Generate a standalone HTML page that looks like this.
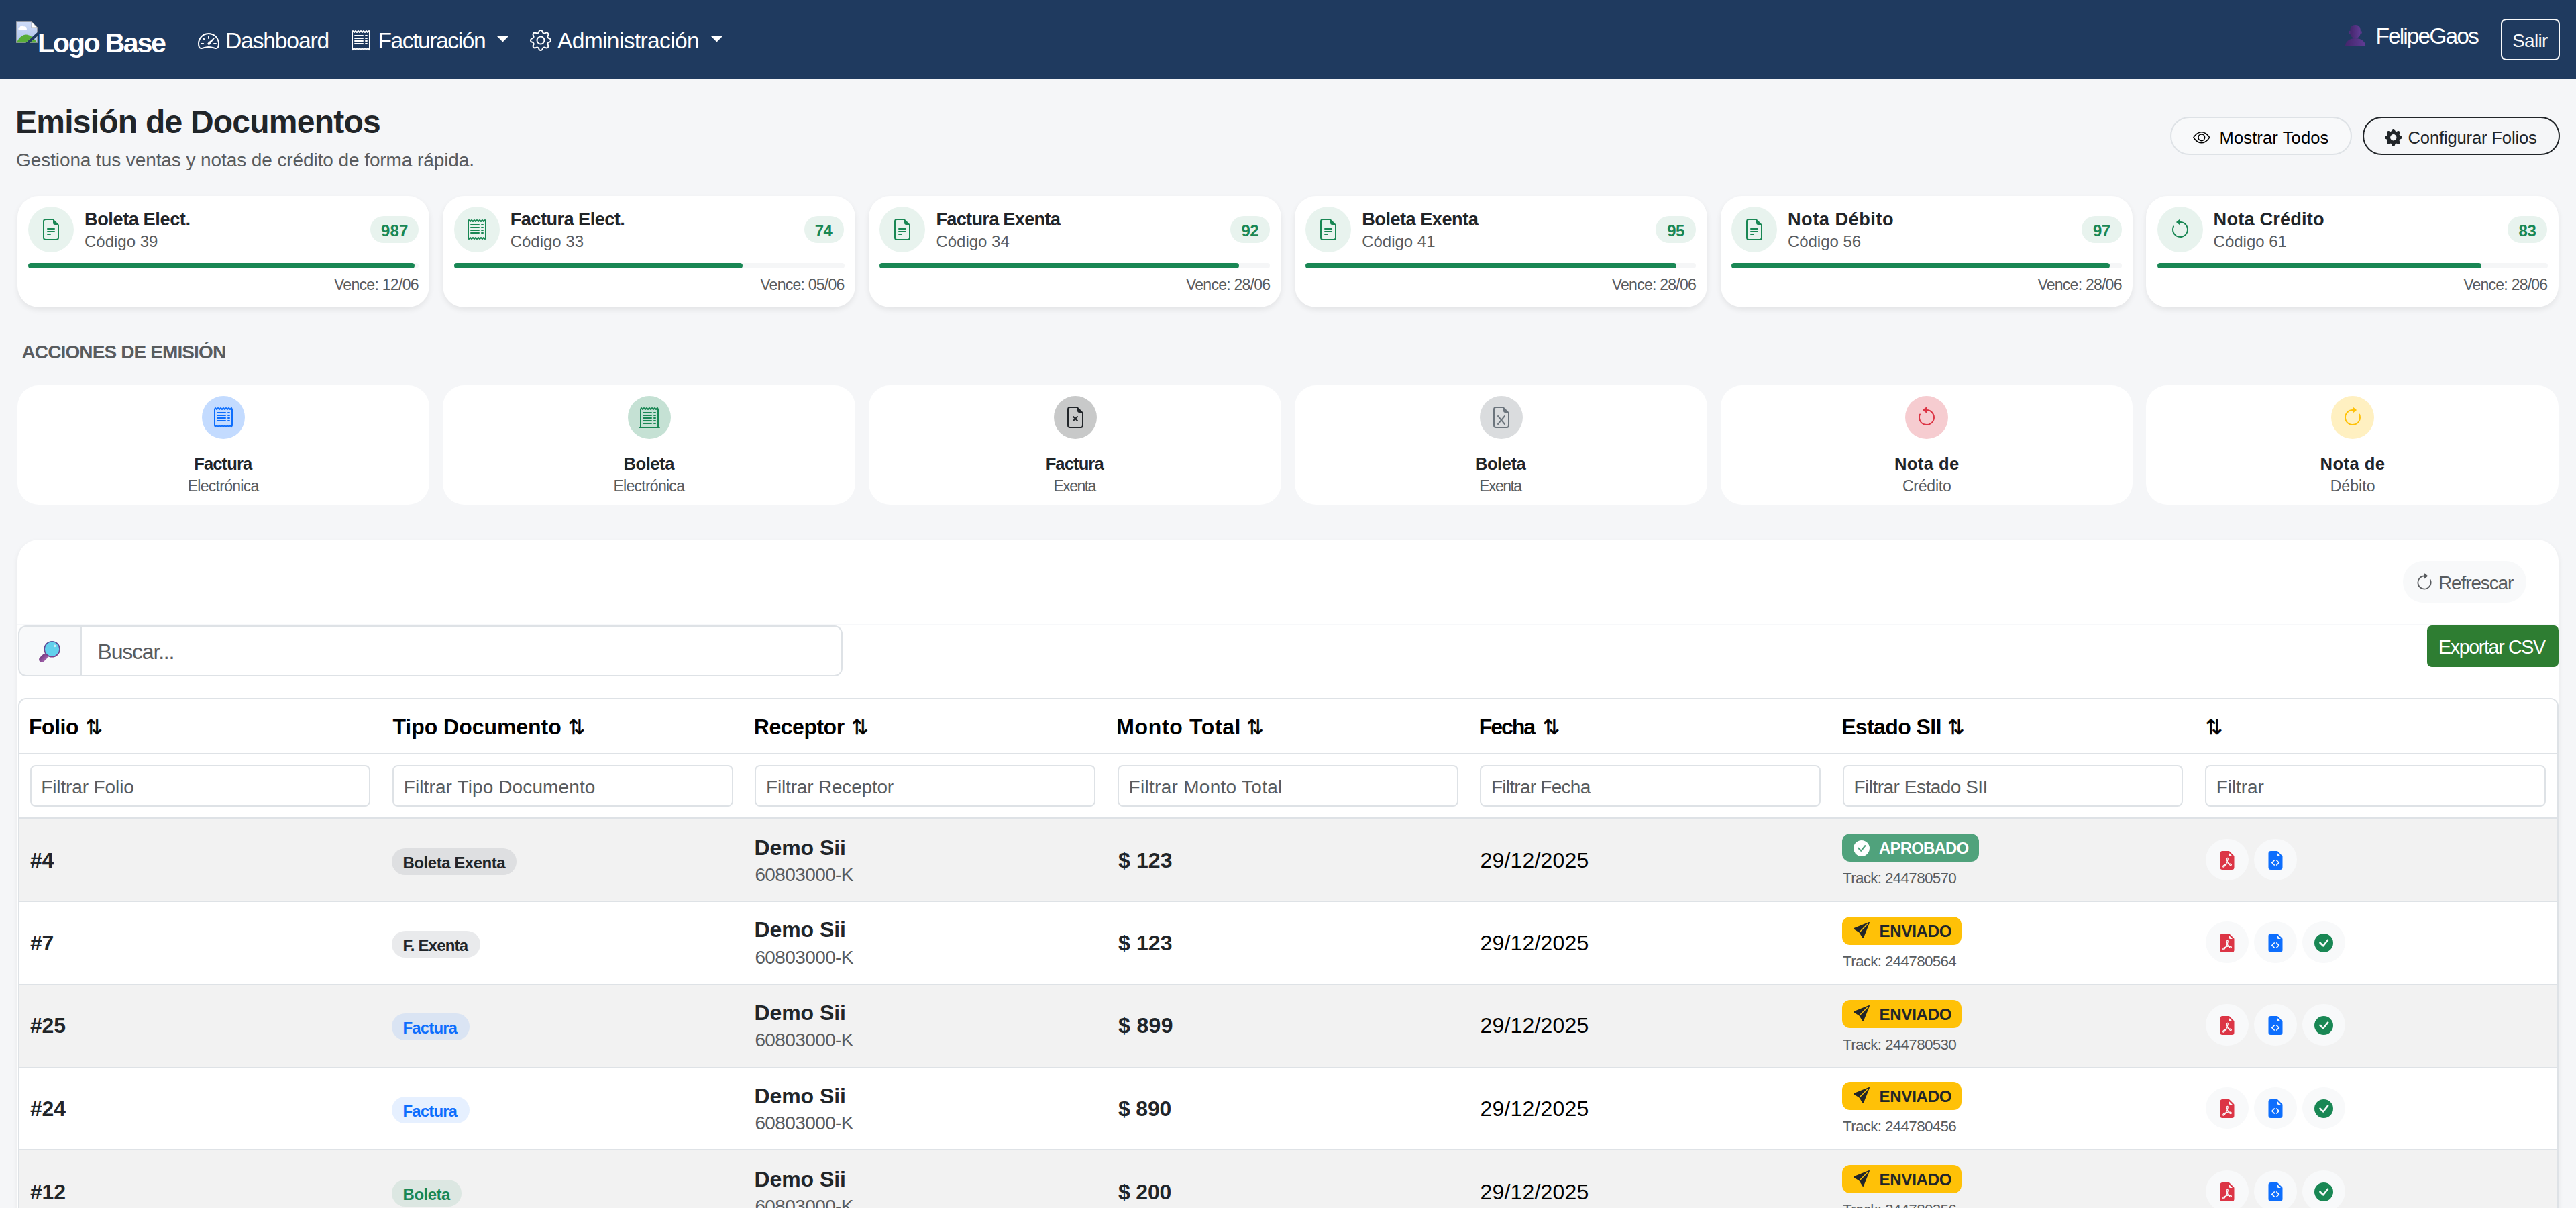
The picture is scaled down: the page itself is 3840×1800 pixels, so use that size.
<!DOCTYPE html>
<html lang="es"><head><meta charset="utf-8"><title>Emisión de Documentos</title><style>
*{box-sizing:border-box;margin:0;padding:0}
html,body{background:#f5f6f8}
body{width:3840px;height:1800px;font-family:"Liberation Sans",sans-serif;color:#212529}
.page{position:relative;overflow:hidden}
.a,.b,.t{position:absolute;display:block}
.t{white-space:nowrap;line-height:1;font-weight:400;font-style:normal}
button{font:inherit;cursor:pointer}
.nav{background:#1f3a5f}
.card{background:#fff;border-radius:32px}
.sh{box-shadow:0 4px 8px rgba(0,0,0,.075)}
.circ{border-radius:50%}
.srt{font-family:"DejaVu Sans",sans-serif;-webkit-text-stroke:.5px #000}
</style></head><body><div class="page" style="left:0px;top:0px;width:3840px;height:1800px;"><nav class="b nav" style="left:0px;top:0px;width:3840px;height:118px;"><svg class="a" style="left:24px;top:32px" width="32" height="32" viewBox="0 0 16 16"><defs><clipPath id="bk"><path d="M0 0h16v7.900L7 16H0zM16 10.750V16h-5.800z"/></clipPath><linearGradient id="sky" x1="0" y1="0" x2="0" y2="1"><stop offset="0" stop-color="#cddbf7"/><stop offset="1" stop-color="#b0c4eb"/></linearGradient></defs><g clip-path="url(#bk)"><path d="M.200.200h11.300l4.300 4.300v11.300H.200z" fill="url(#sky)" stroke="#9b9b9b" stroke-width=".400"/><path d="M2.300 6.400a1.100 1.100 0 0 1 .500-2.100 1.700 1.700 0 0 1 3.100-.600 1.400 1.400 0 0 1 1.900 1.300 1 1 0 0 1-.300 1.400z" fill="#fff"/><path d="M.400 15.600C2.300 11.800 4.900 9.800 7.400 9.800c3 0 5.900 2.700 8.200 5.800z" fill="#58ad38"/><path d="M11.500.200v4.300h4.300z" fill="#fff" stroke="#9b9b9b" stroke-width=".400"/></g></svg><span class="t brand" style="left:56px;top:44px;font-size:41.2px;font-weight:700;color:#fff;letter-spacing:-2.33px;">Logo Base</span><svg class="a" style="left:295px;top:45px" width="32" height="32" viewBox="0 0 16 16" fill="#fff"><path d="M8 4a.5.5 0 0 1 .5.5V6a.5.5 0 0 1-1 0V4.5A.5.5 0 0 1 8 4M3.732 5.732a.5.5 0 0 1 .707 0l.915.914a.5.5 0 1 1-.708.708l-.914-.915a.5.5 0 0 1 0-.707M2 10a.5.5 0 0 1 .5-.5h1.586a.5.5 0 0 1 0 1H2.5A.5.5 0 0 1 2 10m9.5 0a.5.5 0 0 1 .5-.5h1.5a.5.5 0 0 1 0 1H12a.5.5 0 0 1-.5-.5m.754-4.246a.39.39 0 0 0-.527-.02L7.547 9.31a.91.91 0 1 0 1.302 1.258l3.434-4.297a.39.39 0 0 0-.029-.518z"/><path fill-rule="evenodd" d="M0 10a8 8 0 1 1 15.547 2.661c-.442 1.253-1.845 1.602-2.932 1.25C11.309 13.488 9.475 13 8 13c-1.474 0-3.31.488-4.615.911-1.087.352-2.49.003-2.932-1.25A8 8 0 0 1 0 10m8-7a7 7 0 0 0-6.603 9.329c.203.575.923.876 1.68.63C4.397 12.533 6.358 12 8 12s3.604.532 4.923.96c.757.245 1.477-.056 1.68-.631A7 7 0 0 0 8 3"/></svg><span class="t" style="left:336px;top:44px;font-size:33.6px;color:#fff;letter-spacing:-1.14px;">Dashboard</span><svg class="a" style="left:522px;top:44px" width="32" height="32" viewBox="0 0 16 16" fill="#fff"><path d="M1.92.506a.5.5 0 0 1 .434.14L3 1.293l.646-.647a.5.5 0 0 1 .708 0L5 1.293l.646-.647a.5.5 0 0 1 .708 0L7 1.293l.646-.647a.5.5 0 0 1 .708 0L9 1.293l.646-.647a.5.5 0 0 1 .708 0l.646.647.646-.647a.5.5 0 0 1 .708 0l.646.647.646-.647a.5.5 0 0 1 .801.13l.5 1A.5.5 0 0 1 15 2v12a.5.5 0 0 1-.053.224l-.5 1a.5.5 0 0 1-.8.13L13 14.707l-.646.647a.5.5 0 0 1-.708 0L11 14.707l-.646.647a.5.5 0 0 1-.708 0L9 14.707l-.646.647a.5.5 0 0 1-.708 0L7 14.707l-.646.647a.5.5 0 0 1-.708 0L5 14.707l-.646.647a.5.5 0 0 1-.708 0L3 14.707l-.646.647a.5.5 0 0 1-.801-.13l-.5-1A.5.5 0 0 1 1 14V2a.5.5 0 0 1 .053-.224l.5-1a.5.5 0 0 1 .367-.27m.217 1.338L2 2.118v11.764l.137.274.51-.51a.5.5 0 0 1 .707 0l.646.647.646-.646a.5.5 0 0 1 .708 0l.646.646.646-.646a.5.5 0 0 1 .708 0l.646.646.646-.646a.5.5 0 0 1 .708 0l.646.646.646-.646a.5.5 0 0 1 .708 0l.646.646.646-.646a.5.5 0 0 1 .708 0l.509.509.137-.274V2.118l-.137-.274-.51.51a.5.5 0 0 1-.707 0L12 1.707l-.646.647a.5.5 0 0 1-.708 0L10 1.707l-.646.647a.5.5 0 0 1-.708 0L8 1.707l-.646.647a.5.5 0 0 1-.708 0L6 1.707l-.646.647a.5.5 0 0 1-.708 0L4 1.707l-.646.647a.5.5 0 0 1-.708 0z"/><path d="M3 4.5a.5.5 0 0 1 .5-.5h6a.5.5 0 1 1 0 1h-6a.5.5 0 0 1-.5-.5m0 2a.5.5 0 0 1 .5-.5h6a.5.5 0 1 1 0 1h-6a.5.5 0 0 1-.5-.5m0 2a.5.5 0 0 1 .5-.5h6a.5.5 0 1 1 0 1h-6a.5.5 0 0 1-.5-.5m0 2a.5.5 0 0 1 .5-.5h6a.5.5 0 0 1 0 1h-6a.5.5 0 0 1-.5-.5m8-6a.5.5 0 0 1 .5-.5h1a.5.5 0 0 1 0 1h-1a.5.5 0 0 1-.5-.5m0 2a.5.5 0 0 1 .5-.5h1a.5.5 0 0 1 0 1h-1a.5.5 0 0 1-.5-.5m0 2a.5.5 0 0 1 .5-.5h1a.5.5 0 0 1 0 1h-1a.5.5 0 0 1-.5-.5m0 2a.5.5 0 0 1 .5-.5h1a.5.5 0 0 1 0 1h-1a.5.5 0 0 1-.5-.5"/></svg><span class="t" style="left:563.5px;top:44px;font-size:33.6px;color:#fff;letter-spacing:-1.43px;">Facturación</span><svg class="a" style="left:741.2px;top:53.6px" width="17" height="8.5" viewBox="0 0 17 8.5"><path d="M0 0h17L8.500 8.500z" fill="#fff"/></svg><svg class="a" style="left:790px;top:44px" width="32" height="32" viewBox="0 0 16 16" fill="#fff"><path d="M8 4.754a3.246 3.246 0 1 0 0 6.492 3.246 3.246 0 0 0 0-6.492M5.754 8a2.246 2.246 0 1 1 4.492 0 2.246 2.246 0 0 1-4.492 0"/><path d="M9.796 1.343c-.527-1.79-3.065-1.79-3.592 0l-.094.319a.873.873 0 0 1-1.255.52l-.292-.16c-1.64-.892-3.433.902-2.54 2.541l.159.292a.873.873 0 0 1-.52 1.255l-.319.094c-1.79.527-1.79 3.065 0 3.592l.319.094a.873.873 0 0 1 .52 1.255l-.16.292c-.892 1.64.901 3.434 2.541 2.54l.292-.159a.873.873 0 0 1 1.255.52l.094.319c.527 1.79 3.065 1.79 3.592 0l.094-.319a.873.873 0 0 1 1.255-.52l.292.16c1.64.893 3.434-.902 2.54-2.541l-.159-.292a.873.873 0 0 1 .52-1.255l.319-.094c1.79-.527 1.79-3.065 0-3.592l-.319-.094a.873.873 0 0 1-.52-1.255l.16-.292c.893-1.64-.902-3.433-2.541-2.54l-.292.159a.873.873 0 0 1-1.255-.52zm-2.633.283c.246-.835 1.428-.835 1.674 0l.094.319a1.873 1.873 0 0 0 2.693 1.115l.291-.16c.764-.415 1.6.42 1.184 1.185l-.159.292a1.873 1.873 0 0 0 1.116 2.692l.318.094c.835.246.835 1.428 0 1.674l-.319.094a1.873 1.873 0 0 0-1.115 2.693l.16.291c.415.764-.42 1.6-1.185 1.184l-.291-.159a1.873 1.873 0 0 0-2.693 1.116l-.094.318c-.246.835-1.428.835-1.674 0l-.094-.319a1.873 1.873 0 0 0-2.692-1.115l-.292.16c-.764.415-1.6-.42-1.184-1.185l.159-.291A1.873 1.873 0 0 0 1.945 8.93l-.319-.094c-.835-.246-.835-1.428 0-1.674l.319-.094A1.873 1.873 0 0 0 3.06 4.377l-.16-.292c-.415-.764.42-1.6 1.185-1.184l.292.159a1.873 1.873 0 0 0 2.692-1.115z"/></svg><span class="t" style="left:831px;top:44px;font-size:33.6px;color:#fff;letter-spacing:-0.66px;">Administración</span><svg class="a" style="left:1059.5px;top:53.6px" width="17" height="8.5" viewBox="0 0 17 8.5"><path d="M0 0h17L8.500 8.500z" fill="#fff"/></svg><svg class="a" style="left:3495px;top:36px" width="32" height="32" viewBox="0 0 32 32"><defs><linearGradient id="bg1" x1="0" y1="0" x2="1" y2="0"><stop offset="0" stop-color="#44266c"/><stop offset="1" stop-color="#603c94"/></linearGradient></defs><g fill="url(#bg1)"><ellipse cx="7.800" cy="12.200" rx="1.400" ry="2.400"/><ellipse cx="24.300" cy="12.200" rx="1.400" ry="2.400"/><path d="M8.300 7.900a7 7 0 0 1 7-7h1.400a7 7 0 0 1 7 7v5.400a7.700 7.600 0 0 1-15.400 0z"/><path d="M1.100 32a15 11 0 0 1 30 0z"/></g></svg><span class="t" style="left:3541.5px;top:36.5px;font-size:33.6px;color:#fff;letter-spacing:-1.94px;">FelipeGaos</span><a class="b" style="left:3728px;top:28px;width:88px;height:62px;border:2px solid #f8f9fa;border-radius:8px;"><span class="t" style="left:15px;top:17px;font-size:28px;color:#f8f9fa;letter-spacing:-0.67px;">Salir</span></a></nav><header class="b" style="left:0px;top:118px;width:3840px;height:160px;"><h1 class="t" style="left:23px;top:39.5px;font-size:48px;font-weight:700;color:#212529;letter-spacing:-0.77px;">Emisión de Documentos</h1><p class="t" style="left:24px;top:106.5px;font-size:28px;color:#595c5f;letter-spacing:-0.09px;">Gestiona tus ventas y notas de crédito de forma rápida.</p><button class="b" style="left:3235px;top:56px;width:270.5px;height:57px;background:#f8f9fa;border:2px solid #dee2e6;border-radius:30px;"><svg class="a" style="left:32.2px;top:15.75px" width="25.6" height="25.6" viewBox="0 0 16 16" fill="#000"><path d="M16 8s-3-5.5-8-5.5S0 8 0 8s3 5.5 8 5.5S16 8 16 8M1.173 8a13 13 0 0 1 1.66-2.043C4.12 4.668 5.88 3.5 8 3.5s3.879 1.168 5.168 2.457A13 13 0 0 1 14.828 8q-.086.13-.195.288c-.335.48-.83 1.12-1.465 1.755C11.879 11.332 10.119 12.5 8 12.5s-3.879-1.168-5.168-2.457A13 13 0 0 1 1.172 8z"/><path d="M8 5.5a2.5 2.5 0 1 0 0 5 2.5 2.5 0 0 0 0-5M4.5 8a3.5 3.5 0 1 1 7 0 3.5 3.5 0 0 1-7 0"/></svg><span class="t" style="left:71.5px;top:16.75px;font-size:25.6px;color:#000;letter-spacing:0.1px;">Mostrar Todos</span></button><button class="b" style="left:3522px;top:56px;width:293.5px;height:57px;background:transparent;border:2px solid #212529;border-radius:30px;"><svg class="a" style="left:31.4px;top:16.2px" width="25.6" height="25.6" viewBox="0 0 16 16" fill="#212529"><path d="M9.405 1.05c-.413-1.4-2.397-1.4-2.81 0l-.1.34a1.464 1.464 0 0 1-2.105.872l-.31-.17c-1.283-.698-2.686.705-1.987 1.987l.169.311c.446.82.023 1.841-.872 2.105l-.34.1c-1.4.413-1.4 2.397 0 2.81l.34.1a1.464 1.464 0 0 1 .872 2.105l-.17.31c-.698 1.283.705 2.686 1.987 1.987l.311-.169a1.464 1.464 0 0 1 2.105.872l.1.34c.413 1.4 2.397 1.4 2.81 0l.1-.34a1.464 1.464 0 0 1 2.105-.872l.31.17c1.283.698 2.686-.705 1.987-1.987l-.169-.311a1.464 1.464 0 0 1 .872-2.105l.34-.1c1.4-.413 1.4-2.397 0-2.81l-.34-.1a1.464 1.464 0 0 1-.872-2.105l.17-.31c.698-1.283-.705-2.686-1.987-1.987l-.311.169a1.464 1.464 0 0 1-2.105-.872zM8 10.93a2.929 2.929 0 1 1 0-5.86 2.929 2.929 0 0 1 0 5.858z"/></svg><span class="t" style="left:65.5px;top:16.75px;font-size:25.6px;color:#212529;letter-spacing:-0.16px;">Configurar Folios</span></button></header><section class="b" style="left:0px;top:280px;width:3840px;height:190px;"><article class="b card sh" style="left:25.7px;top:12px;width:614.7px;height:166px;"><div class="b circ" style="left:16.3px;top:16px;width:68px;height:68px;background:#e8f3ee;"></div><svg class="a" style="left:34.3px;top:34px" width="32" height="32" viewBox="0 0 16 16" fill="#198754"><path d="M5.5 7a.5.5 0 0 0 0 1h5a.5.5 0 0 0 0-1zM5 9.5a.5.5 0 0 1 .5-.5h5a.5.5 0 0 1 0 1h-5a.5.5 0 0 1-.5-.5m0 2a.5.5 0 0 1 .5-.5h2a.5.5 0 0 1 0 1h-2a.5.5 0 0 1-.5-.5"/><path d="M9.5 0H4a2 2 0 0 0-2 2v12a2 2 0 0 0 2 2h8a2 2 0 0 0 2-2V4.5zm0 1v2A1.5 1.5 0 0 0 11 4.5h2V14a1 1 0 0 1-1 1H4a1 1 0 0 1-1-1V2a1 1 0 0 1 1-1z"/></svg><h6 class="t" style="left:100.3px;top:21.25px;font-size:27.2px;font-weight:700;color:#212529;letter-spacing:-0.43px;">Boleta Elect.</h6><span class="t" style="left:100.3px;top:56px;font-size:24px;color:#595c5f;letter-spacing:-0.01px;">Código 39</span><div class="b" style="left:526.3px;top:30px;width:71.75px;height:40px;background:#e8f3ee;border-radius:20px;"></div><span class="t" style="left:542.3px;top:39.8px;font-size:24px;font-weight:700;color:#198754;letter-spacing:0.15px;">987</span><div class="b" style="left:16.3px;top:100px;width:582px;height:8px;background:#f5f6f7;border-radius:4px;"></div><div class="b" style="left:16.3px;top:100px;width:576.01px;height:8px;background:#198754;border-radius:4px;"></div><span class="t" style="left:472.3px;top:121px;font-size:23.04px;color:#595c5f;letter-spacing:-0.72px;">Vence: 12/06</span></article><article class="b card sh" style="left:660.42px;top:12px;width:614.7px;height:166px;"><div class="b circ" style="left:16.3px;top:16px;width:68px;height:68px;background:#e8f3ee;"></div><svg class="a" style="left:34.3px;top:34px" width="32" height="32" viewBox="0 0 16 16" fill="#198754"><path d="M1.92.506a.5.5 0 0 1 .434.14L3 1.293l.646-.647a.5.5 0 0 1 .708 0L5 1.293l.646-.647a.5.5 0 0 1 .708 0L7 1.293l.646-.647a.5.5 0 0 1 .708 0L9 1.293l.646-.647a.5.5 0 0 1 .708 0l.646.647.646-.647a.5.5 0 0 1 .708 0l.646.647.646-.647a.5.5 0 0 1 .801.13l.5 1A.5.5 0 0 1 15 2v12a.5.5 0 0 1-.053.224l-.5 1a.5.5 0 0 1-.8.13L13 14.707l-.646.647a.5.5 0 0 1-.708 0L11 14.707l-.646.647a.5.5 0 0 1-.708 0L9 14.707l-.646.647a.5.5 0 0 1-.708 0L7 14.707l-.646.647a.5.5 0 0 1-.708 0L5 14.707l-.646.647a.5.5 0 0 1-.708 0L3 14.707l-.646.647a.5.5 0 0 1-.801-.13l-.5-1A.5.5 0 0 1 1 14V2a.5.5 0 0 1 .053-.224l.5-1a.5.5 0 0 1 .367-.27m.217 1.338L2 2.118v11.764l.137.274.51-.51a.5.5 0 0 1 .707 0l.646.647.646-.646a.5.5 0 0 1 .708 0l.646.646.646-.646a.5.5 0 0 1 .708 0l.646.646.646-.646a.5.5 0 0 1 .708 0l.646.646.646-.646a.5.5 0 0 1 .708 0l.646.646.646-.646a.5.5 0 0 1 .708 0l.509.509.137-.274V2.118l-.137-.274-.51.51a.5.5 0 0 1-.707 0L12 1.707l-.646.647a.5.5 0 0 1-.708 0L10 1.707l-.646.647a.5.5 0 0 1-.708 0L8 1.707l-.646.647a.5.5 0 0 1-.708 0L6 1.707l-.646.647a.5.5 0 0 1-.708 0L4 1.707l-.646.647a.5.5 0 0 1-.708 0z"/><path d="M3 4.5a.5.5 0 0 1 .5-.5h6a.5.5 0 1 1 0 1h-6a.5.5 0 0 1-.5-.5m0 2a.5.5 0 0 1 .5-.5h6a.5.5 0 1 1 0 1h-6a.5.5 0 0 1-.5-.5m0 2a.5.5 0 0 1 .5-.5h6a.5.5 0 1 1 0 1h-6a.5.5 0 0 1-.5-.5m0 2a.5.5 0 0 1 .5-.5h6a.5.5 0 0 1 0 1h-6a.5.5 0 0 1-.5-.5m8-6a.5.5 0 0 1 .5-.5h1a.5.5 0 0 1 0 1h-1a.5.5 0 0 1-.5-.5m0 2a.5.5 0 0 1 .5-.5h1a.5.5 0 0 1 0 1h-1a.5.5 0 0 1-.5-.5m0 2a.5.5 0 0 1 .5-.5h1a.5.5 0 0 1 0 1h-1a.5.5 0 0 1-.5-.5m0 2a.5.5 0 0 1 .5-.5h1a.5.5 0 0 1 0 1h-1a.5.5 0 0 1-.5-.5"/></svg><h6 class="t" style="left:100.3px;top:21.25px;font-size:27.2px;font-weight:700;color:#212529;letter-spacing:-0.55px;">Factura Elect.</h6><span class="t" style="left:100.3px;top:56px;font-size:24px;color:#595c5f;letter-spacing:-0.01px;">Código 33</span><div class="b" style="left:538.45px;top:30px;width:59.6px;height:40px;background:#e8f3ee;border-radius:20px;"></div><span class="t" style="left:554.31px;top:39.8px;font-size:24px;font-weight:700;color:#198754;letter-spacing:-0.47px;">74</span><div class="b" style="left:16.3px;top:100px;width:582px;height:8px;background:#f5f6f7;border-radius:4px;"></div><div class="b" style="left:16.3px;top:100px;width:430.68px;height:8px;background:#198754;border-radius:4px;"></div><span class="t" style="left:472.9px;top:121px;font-size:23.04px;color:#595c5f;letter-spacing:-0.77px;">Vence: 05/06</span></article><article class="b card sh" style="left:1295.14px;top:12px;width:614.7px;height:166px;"><div class="b circ" style="left:16.3px;top:16px;width:68px;height:68px;background:#e8f3ee;"></div><svg class="a" style="left:34.3px;top:34px" width="32" height="32" viewBox="0 0 16 16" fill="#198754"><path d="M5.5 7a.5.5 0 0 0 0 1h5a.5.5 0 0 0 0-1zM5 9.5a.5.5 0 0 1 .5-.5h5a.5.5 0 0 1 0 1h-5a.5.5 0 0 1-.5-.5m0 2a.5.5 0 0 1 .5-.5h2a.5.5 0 0 1 0 1h-2a.5.5 0 0 1-.5-.5"/><path d="M9.5 0H4a2 2 0 0 0-2 2v12a2 2 0 0 0 2 2h8a2 2 0 0 0 2-2V4.5zm0 1v2A1.5 1.5 0 0 0 11 4.5h2V14a1 1 0 0 1-1 1H4a1 1 0 0 1-1-1V2a1 1 0 0 1 1-1z"/></svg><h6 class="t" style="left:100.3px;top:21.25px;font-size:27.2px;font-weight:700;color:#212529;letter-spacing:-0.73px;">Factura Exenta</h6><span class="t" style="left:100.3px;top:56px;font-size:24px;color:#595c5f;letter-spacing:-0.01px;">Código 34</span><div class="b" style="left:538.45px;top:30px;width:59.6px;height:40px;background:#e8f3ee;border-radius:20px;"></div><span class="t" style="left:555.31px;top:39.8px;font-size:24px;font-weight:700;color:#198754;letter-spacing:-0.47px;">92</span><div class="b" style="left:16.3px;top:100px;width:582px;height:8px;background:#f5f6f7;border-radius:4px;"></div><div class="b" style="left:16.3px;top:100px;width:535.44px;height:8px;background:#198754;border-radius:4px;"></div><span class="t" style="left:472.9px;top:121px;font-size:23.04px;color:#595c5f;letter-spacing:-0.77px;">Vence: 28/06</span></article><article class="b card sh" style="left:1929.86px;top:12px;width:614.7px;height:166px;"><div class="b circ" style="left:16.3px;top:16px;width:68px;height:68px;background:#e8f3ee;"></div><svg class="a" style="left:34.3px;top:34px" width="32" height="32" viewBox="0 0 16 16" fill="#198754"><path d="M5.5 7a.5.5 0 0 0 0 1h5a.5.5 0 0 0 0-1zM5 9.5a.5.5 0 0 1 .5-.5h5a.5.5 0 0 1 0 1h-5a.5.5 0 0 1-.5-.5m0 2a.5.5 0 0 1 .5-.5h2a.5.5 0 0 1 0 1h-2a.5.5 0 0 1-.5-.5"/><path d="M9.5 0H4a2 2 0 0 0-2 2v12a2 2 0 0 0 2 2h8a2 2 0 0 0 2-2V4.5zm0 1v2A1.5 1.5 0 0 0 11 4.5h2V14a1 1 0 0 1-1 1H4a1 1 0 0 1-1-1V2a1 1 0 0 1 1-1z"/></svg><h6 class="t" style="left:100.3px;top:21.25px;font-size:27.2px;font-weight:700;color:#212529;letter-spacing:-0.51px;">Boleta Exenta</h6><span class="t" style="left:100.3px;top:56px;font-size:24px;color:#595c5f;letter-spacing:-0.01px;">Código 41</span><div class="b" style="left:538.45px;top:30px;width:59.6px;height:40px;background:#e8f3ee;border-radius:20px;"></div><span class="t" style="left:555.31px;top:39.8px;font-size:24px;font-weight:700;color:#198754;letter-spacing:-0.47px;">95</span><div class="b" style="left:16.3px;top:100px;width:582px;height:8px;background:#f5f6f7;border-radius:4px;"></div><div class="b" style="left:16.3px;top:100px;width:552.9px;height:8px;background:#198754;border-radius:4px;"></div><span class="t" style="left:472.9px;top:121px;font-size:23.04px;color:#595c5f;letter-spacing:-0.77px;">Vence: 28/06</span></article><article class="b card sh" style="left:2564.58px;top:12px;width:614.7px;height:166px;"><div class="b circ" style="left:16.3px;top:16px;width:68px;height:68px;background:#e8f3ee;"></div><svg class="a" style="left:34.3px;top:34px" width="32" height="32" viewBox="0 0 16 16" fill="#198754"><path d="M5.5 7a.5.5 0 0 0 0 1h5a.5.5 0 0 0 0-1zM5 9.5a.5.5 0 0 1 .5-.5h5a.5.5 0 0 1 0 1h-5a.5.5 0 0 1-.5-.5m0 2a.5.5 0 0 1 .5-.5h2a.5.5 0 0 1 0 1h-2a.5.5 0 0 1-.5-.5"/><path d="M9.5 0H4a2 2 0 0 0-2 2v12a2 2 0 0 0 2 2h8a2 2 0 0 0 2-2V4.5zm0 1v2A1.5 1.5 0 0 0 11 4.5h2V14a1 1 0 0 1-1 1H4a1 1 0 0 1-1-1V2a1 1 0 0 1 1-1z"/></svg><h6 class="t" style="left:100.3px;top:21.25px;font-size:27.2px;font-weight:700;color:#212529;letter-spacing:0.51px;">Nota Débito</h6><span class="t" style="left:100.3px;top:56px;font-size:24px;color:#595c5f;letter-spacing:-0.01px;">Código 56</span><div class="b" style="left:538.45px;top:30px;width:59.6px;height:40px;background:#e8f3ee;border-radius:20px;"></div><span class="t" style="left:555.31px;top:39.8px;font-size:24px;font-weight:700;color:#198754;letter-spacing:-0.47px;">97</span><div class="b" style="left:16.3px;top:100px;width:582px;height:8px;background:#f5f6f7;border-radius:4px;"></div><div class="b" style="left:16.3px;top:100px;width:564.54px;height:8px;background:#198754;border-radius:4px;"></div><span class="t" style="left:472.9px;top:121px;font-size:23.04px;color:#595c5f;letter-spacing:-0.77px;">Vence: 28/06</span></article><article class="b card sh" style="left:3199.3px;top:12px;width:614.7px;height:166px;"><div class="b circ" style="left:16.3px;top:16px;width:68px;height:68px;background:#e8f3ee;"></div><svg class="a" style="left:34.3px;top:34px" width="32" height="32" viewBox="0 0 16 16" fill="#198754"><path fill-rule="evenodd" d="M8 3a5 5 0 1 1-4.546 2.914.5.5 0 0 0-.908-.417A6 6 0 1 0 8 2z"/><path d="M8 4.466V.534a.25.25 0 0 0-.41-.192L5.23 2.308a.25.25 0 0 0 0 .384l2.36 1.966A.25.25 0 0 0 8 4.466"/></svg><h6 class="t" style="left:100.3px;top:21.25px;font-size:27.2px;font-weight:700;color:#212529;letter-spacing:0.18px;">Nota Crédito</h6><span class="t" style="left:100.3px;top:56px;font-size:24px;color:#595c5f;letter-spacing:-0.01px;">Código 61</span><div class="b" style="left:538.45px;top:30px;width:59.6px;height:40px;background:#e8f3ee;border-radius:20px;"></div><span class="t" style="left:555.31px;top:39.8px;font-size:24px;font-weight:700;color:#198754;letter-spacing:-0.47px;">83</span><div class="b" style="left:16.3px;top:100px;width:582px;height:8px;background:#f5f6f7;border-radius:4px;"></div><div class="b" style="left:16.3px;top:100px;width:483.06px;height:8px;background:#198754;border-radius:4px;"></div><span class="t" style="left:472.9px;top:121px;font-size:23.04px;color:#595c5f;letter-spacing:-0.77px;">Vence: 28/06</span></article></section><h6 class="t" style="left:32.5px;top:510.75px;font-size:28px;font-weight:700;color:#595c5f;letter-spacing:-0.88px;">ACCIONES DE EMISIÓN</h6><section class="b" style="left:0px;top:560px;width:3840px;height:200px;"><article class="b card" style="left:25.7px;top:14px;width:614.7px;height:178px;"><div class="b circ" style="left:275.8px;top:16px;width:64px;height:64px;background:#c3dbff;"></div><svg class="a" style="left:291.8px;top:32px" width="32" height="32" viewBox="0 0 16 16" fill="#0d6efd"><path d="M1.92.506a.5.5 0 0 1 .434.14L3 1.293l.646-.647a.5.5 0 0 1 .708 0L5 1.293l.646-.647a.5.5 0 0 1 .708 0L7 1.293l.646-.647a.5.5 0 0 1 .708 0L9 1.293l.646-.647a.5.5 0 0 1 .708 0l.646.647.646-.647a.5.5 0 0 1 .708 0l.646.647.646-.647a.5.5 0 0 1 .801.13l.5 1A.5.5 0 0 1 15 2v12a.5.5 0 0 1-.053.224l-.5 1a.5.5 0 0 1-.8.13L13 14.707l-.646.647a.5.5 0 0 1-.708 0L11 14.707l-.646.647a.5.5 0 0 1-.708 0L9 14.707l-.646.647a.5.5 0 0 1-.708 0L7 14.707l-.646.647a.5.5 0 0 1-.708 0L5 14.707l-.646.647a.5.5 0 0 1-.708 0L3 14.707l-.646.647a.5.5 0 0 1-.801-.13l-.5-1A.5.5 0 0 1 1 14V2a.5.5 0 0 1 .053-.224l.5-1a.5.5 0 0 1 .367-.27m.217 1.338L2 2.118v11.764l.137.274.51-.51a.5.5 0 0 1 .707 0l.646.647.646-.646a.5.5 0 0 1 .708 0l.646.646.646-.646a.5.5 0 0 1 .708 0l.646.646.646-.646a.5.5 0 0 1 .708 0l.646.646.646-.646a.5.5 0 0 1 .708 0l.646.646.646-.646a.5.5 0 0 1 .708 0l.509.509.137-.274V2.118l-.137-.274-.51.51a.5.5 0 0 1-.707 0L12 1.707l-.646.647a.5.5 0 0 1-.708 0L10 1.707l-.646.647a.5.5 0 0 1-.708 0L8 1.707l-.646.647a.5.5 0 0 1-.708 0L6 1.707l-.646.647a.5.5 0 0 1-.708 0L4 1.707l-.646.647a.5.5 0 0 1-.708 0z"/><path d="M3 4.5a.5.5 0 0 1 .5-.5h6a.5.5 0 1 1 0 1h-6a.5.5 0 0 1-.5-.5m0 2a.5.5 0 0 1 .5-.5h6a.5.5 0 1 1 0 1h-6a.5.5 0 0 1-.5-.5m0 2a.5.5 0 0 1 .5-.5h6a.5.5 0 1 1 0 1h-6a.5.5 0 0 1-.5-.5m0 2a.5.5 0 0 1 .5-.5h6a.5.5 0 0 1 0 1h-6a.5.5 0 0 1-.5-.5m8-6a.5.5 0 0 1 .5-.5h1a.5.5 0 0 1 0 1h-1a.5.5 0 0 1-.5-.5m0 2a.5.5 0 0 1 .5-.5h1a.5.5 0 0 1 0 1h-1a.5.5 0 0 1-.5-.5m0 2a.5.5 0 0 1 .5-.5h1a.5.5 0 0 1 0 1h-1a.5.5 0 0 1-.5-.5m0 2a.5.5 0 0 1 .5-.5h1a.5.5 0 0 1 0 1h-1a.5.5 0 0 1-.5-.5"/></svg><h6 class="t" style="left:263.53px;top:105px;font-size:25.6px;font-weight:700;color:#212529;letter-spacing:-0.91px;">Factura</h6><span class="t" style="left:254.03px;top:139px;font-size:23.04px;color:#595c5f;letter-spacing:-0.74px;">Electrónica</span></article><article class="b card" style="left:660.42px;top:14px;width:614.7px;height:178px;"><div class="b circ" style="left:275.8px;top:16px;width:64px;height:64px;background:#c5e1d4;"></div><svg class="a" style="left:291.8px;top:32px" width="32" height="32" viewBox="0 0 16 16" fill="#198754"><path d="M3 4.5a.5.5 0 0 1 .5-.5h6a.5.5 0 1 1 0 1h-6a.5.5 0 0 1-.5-.5m0 2a.5.5 0 0 1 .5-.5h6a.5.5 0 1 1 0 1h-6a.5.5 0 0 1-.5-.5m0 2a.5.5 0 0 1 .5-.5h6a.5.5 0 1 1 0 1h-6a.5.5 0 0 1-.5-.5m0 2a.5.5 0 0 1 .5-.5h6a.5.5 0 0 1 0 1h-6a.5.5 0 0 1-.5-.5m0 2a.5.5 0 0 1 .5-.5h6a.5.5 0 0 1 0 1h-6a.5.5 0 0 1-.5-.5M11.5 4a.5.5 0 0 0 0 1h1a.5.5 0 0 0 0-1zm0 2a.5.5 0 0 0 0 1h1a.5.5 0 0 0 0-1zm0 2a.5.5 0 0 0 0 1h1a.5.5 0 0 0 0-1zm0 2a.5.5 0 0 0 0 1h1a.5.5 0 0 0 0-1zm0 2a.5.5 0 0 0 0 1h1a.5.5 0 0 0 0-1z"/><path d="M2.354.646a.5.5 0 0 0-.801.13l-.5 1A.5.5 0 0 0 1 2v13H.5a.5.5 0 0 0 0 1h15a.5.5 0 0 0 0-1H15V2a.5.5 0 0 0-.053-.224l-.5-1a.5.5 0 0 0-.8-.13L13 1.293l-.646-.647a.5.5 0 0 0-.708 0L11 1.293l-.646-.647a.5.5 0 0 0-.708 0L9 1.293 8.354.646a.5.5 0 0 0-.708 0L7 1.293 6.354.646a.5.5 0 0 0-.708 0L5 1.293 4.354.646a.5.5 0 0 0-.708 0L3 1.293zm-.217 1.198.51.51a.5.5 0 0 0 .707 0L4 1.707l.646.647a.5.5 0 0 0 .708 0L6 1.707l.646.647a.5.5 0 0 0 .708 0L8 1.707l.646.647a.5.5 0 0 0 .708 0L10 1.707l.646.647a.5.5 0 0 0 .708 0L12 1.707l.646.647a.5.5 0 0 0 .708 0l.509-.51.137.274V15H2V2.118z"/></svg><h6 class="t" style="left:269.05px;top:105px;font-size:25.6px;font-weight:700;color:#212529;letter-spacing:-0.46px;">Boleta</h6><span class="t" style="left:254.02px;top:139px;font-size:23.04px;color:#595c5f;letter-spacing:-0.74px;">Electrónica</span></article><article class="b card" style="left:1295.14px;top:14px;width:614.7px;height:178px;"><div class="b circ" style="left:275.8px;top:16px;width:64px;height:64px;background:#c8c9c9;"></div><svg class="a" style="left:291.8px;top:32px" width="32" height="32" viewBox="0 0 16 16" fill="#212529"><path d="M6.854 7.146a.5.5 0 1 0-.708.708L7.293 9l-1.147 1.146a.5.5 0 0 0 .708.708L8 9.707l1.146 1.147a.5.5 0 0 0 .708-.708L8.707 9l1.147-1.146a.5.5 0 0 0-.708-.708L8 8.293z"/><path d="M14 14V4.5L9.5 0H4a2 2 0 0 0-2 2v12a2 2 0 0 0 2 2h8a2 2 0 0 0 2-2M9.5 3A1.5 1.5 0 0 0 11 4.5h2V14a1 1 0 0 1-1 1H4a1 1 0 0 1-1-1V2a1 1 0 0 1 1-1h5.5z"/></svg><h6 class="t" style="left:263.52px;top:105px;font-size:25.6px;font-weight:700;color:#212529;letter-spacing:-0.91px;">Factura</h6><span class="t" style="left:275.3px;top:139px;font-size:23.04px;color:#595c5f;letter-spacing:-1.54px;">Exenta</span></article><article class="b card" style="left:1929.86px;top:14px;width:614.7px;height:178px;"><div class="b circ" style="left:275.8px;top:16px;width:64px;height:64px;background:#dadcde;"></div><svg class="a" style="left:291.8px;top:32px" width="32" height="32" viewBox="0 0 16 16" fill="#6c757d"><path d="M5.884 6.68a.5.5 0 1 0-.768.64L7.349 10l-2.233 2.68a.5.5 0 0 0 .768.64L8 10.781l2.116 2.54a.5.5 0 0 0 .768-.641L8.651 10l2.233-2.68a.5.5 0 0 0-.768-.64L8 9.219l-2.116-2.54z"/><path d="M14 14V4.5L9.5 0H4a2 2 0 0 0-2 2v12a2 2 0 0 0 2 2h8a2 2 0 0 0 2-2M9.5 3A1.5 1.5 0 0 0 11 4.5h2V14a1 1 0 0 1-1 1H4a1 1 0 0 1-1-1V2a1 1 0 0 1 1-1h5.5z"/></svg><h6 class="t" style="left:269.05px;top:105px;font-size:25.6px;font-weight:700;color:#212529;letter-spacing:-0.46px;">Boleta</h6><span class="t" style="left:275.3px;top:139px;font-size:23.04px;color:#595c5f;letter-spacing:-1.54px;">Exenta</span></article><article class="b card" style="left:2564.58px;top:14px;width:614.7px;height:178px;"><div class="b circ" style="left:275.8px;top:16px;width:64px;height:64px;background:#f6ccd0;"></div><svg class="a" style="left:291.8px;top:32px" width="32" height="32" viewBox="0 0 16 16" fill="#dc3545"><path fill-rule="evenodd" d="M8 3a5 5 0 1 1-4.546 2.914.5.5 0 0 0-.908-.417A6 6 0 1 0 8 2z"/><path d="M8 4.466V.534a.25.25 0 0 0-.41-.192L5.23 2.308a.25.25 0 0 0 0 .384l2.36 1.966A.25.25 0 0 0 8 4.466"/></svg><h6 class="t" style="left:259.3px;top:105px;font-size:25.6px;font-weight:700;color:#212529;letter-spacing:0.43px;">Nota de</h6><span class="t" style="left:271.3px;top:139px;font-size:23.04px;color:#595c5f;letter-spacing:-0.21px;">Crédito</span></article><article class="b card" style="left:3199.3px;top:14px;width:614.7px;height:178px;"><div class="b circ" style="left:275.8px;top:16px;width:64px;height:64px;background:#fff0c1;"></div><svg class="a" style="left:291.8px;top:32px" width="32" height="32" viewBox="0 0 16 16" fill="#ffc107"><path fill-rule="evenodd" d="M8 3a5 5 0 1 0 4.546 2.914.5.5 0 0 1 .908-.417A6 6 0 1 1 8 2z"/><path d="M8 4.466V.534a.25.25 0 0 1 .41-.192l2.36 1.966c.12.1.12.284 0 .384L8.41 4.658A.25.25 0 0 1 8 4.466"/></svg><h6 class="t" style="left:259.3px;top:105px;font-size:25.6px;font-weight:700;color:#212529;letter-spacing:0.43px;">Nota de</h6><span class="t" style="left:274.35px;top:139px;font-size:23.04px;color:#595c5f;letter-spacing:0.07px;">Débito</span></article></section><main class="b card sh" style="left:26px;top:804px;width:3788px;height:1100px;"><div class="b" style="left:0px;top:126px;width:3788px;height:2px;background:#f7f8fa;"></div><button class="b" style="left:3556px;top:32px;width:184px;height:62px;background:#f8f9fa;border:0;border-radius:31px;"><svg class="a" style="left:18px;top:18px" width="28" height="28" viewBox="0 0 16 16" fill="#595c5f"><path fill-rule="evenodd" d="M8 3a5 5 0 1 0 4.546 2.914.5.5 0 0 1 .908-.417A6 6 0 1 1 8 2z"/><path d="M8 4.466V.534a.25.25 0 0 1 .41-.192l2.36 1.966c.12.1.12.284 0 .384L8.41 4.658A.25.25 0 0 1 8 4.466"/></svg><span class="t" style="left:53px;top:19px;font-size:28px;color:#595c5f;letter-spacing:-1.13px;">Refrescar</span></button><div class="b" style="left:94px;top:128px;width:1135.5px;height:75.5px;background:#fff;border:2px solid #dee2e6;border-radius:0 12px 12px 0;"><span class="t" style="left:23.5px;top:21px;font-size:32px;color:#595c5f;letter-spacing:-1.2px;">Buscar...</span></div><div class="b" style="left:1px;top:128px;width:95px;height:75.5px;background:#f8f9fa;border:2px solid #dee2e6;border-radius:12px 0 0 12px;"><svg class="a" style="left:28px;top:20px" width="34" height="34" viewBox="0 0 34 34"><defs><linearGradient id="mg1" x1="0" y1="0" x2="1" y2="1"><stop offset="0" stop-color="#7a3f87"/><stop offset="1" stop-color="#9d5ea6"/></linearGradient><linearGradient id="mg2" x1="0" y1="0" x2="0" y2="1"><stop offset="0" stop-color="#564d98"/><stop offset="1" stop-color="#7d3f8b"/></linearGradient></defs><path d="M10.060 24 5.300 28.700" stroke="url(#mg1)" stroke-width="8.400" stroke-linecap="round"/><circle cx="20.600" cy="13.200" r="11.450" fill="#62d0ec" stroke="url(#mg2)" stroke-width="1.700"/><circle cx="24.700" cy="8.300" r="1.900" fill="#c9ecf8"/></svg></div><button class="b" style="left:3592px;top:128px;width:196px;height:62px;background:#2e7d32;border:0;border-radius:7px;"><span class="t" style="left:17px;top:18.25px;font-size:28.6px;color:#fff;letter-spacing:-1.34px;">Exportar CSV</span></button><div class="b" style="left:1px;top:236px;width:3787px;height:800px;border:2px solid #dee2e6;border-radius:12px;overflow:hidden;" role="table"><div class="b" style="left:0px;top:0px;width:3783px;height:82px;border-bottom:2px solid #dee2e6;background:#fff;" role="row"><span class="t" style="left:14px;top:24.75px;font-size:32px;font-weight:700;color:#000;letter-spacing:-0.47px;">Folio</span><span class="t srt" style="left:98.3px;top:26.7px;font-size:30.7px;color:#000;letter-spacing:-0.06px;">⇅</span><span class="t" style="left:556.43px;top:24.75px;font-size:32px;font-weight:700;color:#000;letter-spacing:-0.04px;">Tipo Documento</span><span class="t srt" style="left:817.53px;top:26.7px;font-size:30.7px;color:#000;letter-spacing:-0.06px;">⇅</span><span class="t" style="left:1094.86px;top:24.75px;font-size:32px;font-weight:700;color:#000;letter-spacing:-0.49px;">Receptor</span><span class="t srt" style="left:1239.96px;top:26.7px;font-size:30.7px;color:#000;letter-spacing:-0.06px;">⇅</span><span class="t" style="left:1635.29px;top:24.75px;font-size:32px;font-weight:700;color:#000;letter-spacing:0.63px;">Monto Total</span><span class="t srt" style="left:1828.89px;top:26.7px;font-size:30.7px;color:#000;letter-spacing:-0.06px;">⇅</span><span class="t" style="left:2175.71px;top:24.75px;font-size:32px;font-weight:700;color:#000;letter-spacing:-2.05px;">Fecha</span><span class="t srt" style="left:2270.51px;top:26.7px;font-size:30.7px;color:#000;letter-spacing:-0.06px;">⇅</span><span class="t" style="left:2716.14px;top:24.75px;font-size:32px;font-weight:700;color:#000;letter-spacing:-0.6px;">Estado SII</span><span class="t srt" style="left:2873.84px;top:26.7px;font-size:30.7px;color:#000;letter-spacing:-0.06px;">⇅</span><span class="t srt" style="left:3258.6px;top:26.7px;font-size:30.7px;color:#000;letter-spacing:-0.06px;">⇅</span></div><div class="b" style="left:0px;top:82px;width:3783px;height:96px;border-bottom:2px solid #dee2e6;background:#fff;" role="row"><div class="b" style="left:15.5px;top:16px;width:507.8px;height:62px;background:#fff;border:2px solid #dee2e6;border-radius:8px;"><span class="t" style="left:14.75px;top:16.5px;font-size:28px;color:#595c5f;letter-spacing:-0.12px;">Filtrar Folio</span></div><div class="b" style="left:555.93px;top:16px;width:507.8px;height:62px;background:#fff;border:2px solid #dee2e6;border-radius:8px;"><span class="t" style="left:14.75px;top:16.5px;font-size:28px;color:#595c5f;letter-spacing:0.12px;">Filtrar Tipo Documento</span></div><div class="b" style="left:1096.36px;top:16px;width:507.8px;height:62px;background:#fff;border:2px solid #dee2e6;border-radius:8px;"><span class="t" style="left:14.75px;top:16.5px;font-size:28px;color:#595c5f;letter-spacing:-0.19px;">Filtrar Receptor</span></div><div class="b" style="left:1636.79px;top:16px;width:507.8px;height:62px;background:#fff;border:2px solid #dee2e6;border-radius:8px;"><span class="t" style="left:14.75px;top:16.5px;font-size:28px;color:#595c5f;letter-spacing:0.29px;">Filtrar Monto Total</span></div><div class="b" style="left:2177.21px;top:16px;width:507.8px;height:62px;background:#fff;border:2px solid #dee2e6;border-radius:8px;"><span class="t" style="left:14.75px;top:16.5px;font-size:28px;color:#595c5f;letter-spacing:-0.74px;">Filtrar Fecha</span></div><div class="b" style="left:2717.64px;top:16px;width:507.8px;height:62px;background:#fff;border:2px solid #dee2e6;border-radius:8px;"><span class="t" style="left:14.75px;top:16.5px;font-size:28px;color:#595c5f;letter-spacing:-0.5px;">Filtrar Estado SII</span></div><div class="b" style="left:3258.07px;top:16px;width:507.8px;height:62px;background:#fff;border:2px solid #dee2e6;border-radius:8px;"><span class="t" style="left:14.75px;top:16.5px;font-size:28px;color:#595c5f;letter-spacing:-0.1px;">Filtrar</span></div></div><div class="b" style="left:0px;top:178px;width:3783px;height:124px;border-bottom:2px solid #dee2e6;background:#f2f2f2;" role="row"><span class="t" style="left:16px;top:46px;font-size:32px;font-weight:700;color:#212529;letter-spacing:-0.3px;">#4</span><div class="b" style="left:555px;top:44px;width:186px;height:40px;background:rgba(108,117,125,.15);border-radius:20px;"></div><span class="t" style="left:571.5px;top:54.25px;font-size:24px;font-weight:700;color:#212529;letter-spacing:-0.47px;">Boleta Exenta</span><span class="t" style="left:1095.4px;top:26.75px;font-size:32px;font-weight:700;color:#212529;letter-spacing:-0.05px;">Demo Sii</span><span class="t" style="left:1096.4px;top:70px;font-size:28px;color:#595c5f;letter-spacing:-0.61px;">60803000-K</span><span class="t" style="left:1638px;top:46px;font-size:32px;font-weight:700;color:#212529;letter-spacing:0.13px;">$ 123</span><span class="t" style="left:2177.6px;top:46px;font-size:32px;color:#000;letter-spacing:0.17px;">29/12/2025</span><div class="b" style="left:2717px;top:22px;width:204px;height:42px;background:rgba(25,135,84,.75);border-radius:12px;"></div><svg class="a" style="left:2733.5px;top:32px" width="24" height="24" viewBox="0 0 16 16" fill="#fff"><path d="M16 8A8 8 0 1 1 0 8a8 8 0 0 1 16 0m-3.97-3.03a.75.75 0 0 0-1.08.022L7.477 9.417 5.384 7.323a.75.75 0 0 0-1.06 1.06L6.97 11.03a.75.75 0 0 0 1.079-.02l3.992-4.99a.75.75 0 0 0-.01-1.05z"/></svg><span class="t" style="left:2772px;top:31.75px;font-size:24px;font-weight:700;color:#fff;letter-spacing:-0.83px;">APROBADO</span><span class="t" style="left:2718px;top:78.1px;font-size:22.4px;color:#595c5f;letter-spacing:-0.66px;">Track: 244780570</span><div class="b circ" style="left:3259px;top:30px;width:64px;height:62px;background:#f8f9fa;"></div><svg class="a" style="left:3277px;top:48px" width="28" height="28" viewBox="0 0 16 16" fill="#dc3545"><path d="M5.523 12.424q.21-.124.459-.238a8 8 0 0 1-.45.606c-.28.337-.498.516-.635.572l-.035.012a.3.3 0 0 1-.026-.044c-.056-.11-.054-.216.04-.36.106-.165.319-.354.647-.548m2.455-1.647q-.178.037-.356.078a21 21 0 0 0 .5-1.05 12 12 0 0 0 .51.858q-.326.048-.654.114m2.525.939a4 4 0 0 1-.435-.41q.344.007.612.054c.317.057.466.147.518.209a.1.1 0 0 1 .026.064.44.44 0 0 1-.06.2.3.3 0 0 1-.094.124.1.1 0 0 1-.069.015c-.09-.003-.258-.066-.498-.256M8.278 6.97c-.04.244-.108.524-.2.829a5 5 0 0 1-.089-.346c-.076-.353-.087-.63-.046-.822.038-.177.11-.248.196-.283a.5.5 0 0 1 .145-.04c.013.03.028.092.032.198q.008.183-.038.465z"/><path fill-rule="evenodd" d="M4 0h5.293A1 1 0 0 1 10 .293L13.707 4a1 1 0 0 1 .293.707V14a2 2 0 0 1-2 2H4a2 2 0 0 1-2-2V2a2 2 0 0 1 2-2m5.5 1.5v2a1 1 0 0 0 1 1h2zM4.165 13.668c.09.18.23.343.438.419.207.075.412.04.58-.03.318-.13.635-.436.926-.786.333-.401.683-.927 1.021-1.51a11.7 11.7 0 0 1 1.997-.406c.3.383.61.713.91.95.28.22.603.403.934.417a.86.86 0 0 0 .51-.138c.155-.101.27-.247.354-.416.09-.181.145-.37.138-.563a.84.84 0 0 0-.2-.518c-.226-.27-.596-.4-.96-.465a5.8 5.8 0 0 0-1.335-.05 11 11 0 0 1-.98-1.686c.25-.66.437-1.284.52-1.794.036-.218.055-.426.048-.614a1.24 1.24 0 0 0-.127-.538.7.7 0 0 0-.477-.365c-.202-.043-.41 0-.601.077-.377.15-.576.47-.651.823-.073.34-.04.736.046 1.136.088.406.238.848.43 1.295a20 20 0 0 1-1.062 2.227 7.7 7.7 0 0 0-1.482.645c-.37.22-.699.48-.897.787-.21.326-.275.714-.08 1.103"/></svg><div class="b circ" style="left:3331px;top:30px;width:64px;height:62px;background:#f8f9fa;"></div><svg class="a" style="left:3349px;top:48px" width="28" height="28" viewBox="0 0 16 16" fill="#0d6efd"><path d="M9.293 0H4a2 2 0 0 0-2 2v12a2 2 0 0 0 2 2h8a2 2 0 0 0 2-2V4.707A1 1 0 0 0 13.707 4L10 .293A1 1 0 0 0 9.293 0M9.5 3.5v-2l3 3h-2a1 1 0 0 1-1-1M6.646 7.646a.5.5 0 1 1 .708.708L5.707 10l1.647 1.646a.5.5 0 0 1-.708.708l-2-2a.5.5 0 0 1 0-.708zm2.708 0 2 2a.5.5 0 0 1 0 .708l-2 2a.5.5 0 0 1-.708-.708L10.293 10 8.646 8.354a.5.5 0 1 1 .708-.708"/></svg></div><div class="b" style="left:0px;top:302px;width:3783px;height:124px;border-bottom:2px solid #dee2e6;background:#fff;" role="row"><span class="t" style="left:16px;top:44.5px;font-size:32px;font-weight:700;color:#212529;letter-spacing:-0.19px;">#7</span><div class="b" style="left:555px;top:42.5px;width:131.5px;height:40px;background:rgba(108,117,125,.15);border-radius:20px;"></div><span class="t" style="left:571.5px;top:52.75px;font-size:24px;font-weight:700;color:#212529;letter-spacing:-0.81px;">F. Exenta</span><span class="t" style="left:1095.4px;top:25.25px;font-size:32px;font-weight:700;color:#212529;letter-spacing:-0.05px;">Demo Sii</span><span class="t" style="left:1096.4px;top:68.5px;font-size:28px;color:#595c5f;letter-spacing:-0.61px;">60803000-K</span><span class="t" style="left:1638px;top:44.5px;font-size:32px;font-weight:700;color:#212529;letter-spacing:0.13px;">$ 123</span><span class="t" style="left:2177.6px;top:44.5px;font-size:32px;color:#000;letter-spacing:0.17px;">29/12/2025</span><div class="b" style="left:2717px;top:22.25px;width:178px;height:41.5px;background:#ffc107;border-radius:12px;"></div><svg class="a" style="left:2733.5px;top:30px" width="24" height="24" viewBox="0 0 16 16" fill="#212529"><path d="M15.964.686a.5.5 0 0 0-.65-.65L.767 5.855H.766l-.452.18a.5.5 0 0 0-.082.887l.41.26.001.002 4.995 3.178 3.178 4.995.002.002.26.41a.5.5 0 0 0 .886-.083zm-1.833 1.89L6.637 10.07l-.215-.338a.5.5 0 0 0-.154-.154l-.338-.215 7.494-7.494 1.178-.471z"/></svg><span class="t" style="left:2772.5px;top:31.75px;font-size:24px;font-weight:700;color:#212529;letter-spacing:-0.24px;">ENVIADO</span><span class="t" style="left:2718px;top:77.95px;font-size:22.4px;color:#595c5f;letter-spacing:-0.66px;">Track: 244780564</span><div class="b circ" style="left:3259px;top:28.5px;width:64px;height:62px;background:#f8f9fa;"></div><svg class="a" style="left:3277px;top:46.5px" width="28" height="28" viewBox="0 0 16 16" fill="#dc3545"><path d="M5.523 12.424q.21-.124.459-.238a8 8 0 0 1-.45.606c-.28.337-.498.516-.635.572l-.035.012a.3.3 0 0 1-.026-.044c-.056-.11-.054-.216.04-.36.106-.165.319-.354.647-.548m2.455-1.647q-.178.037-.356.078a21 21 0 0 0 .5-1.05 12 12 0 0 0 .51.858q-.326.048-.654.114m2.525.939a4 4 0 0 1-.435-.41q.344.007.612.054c.317.057.466.147.518.209a.1.1 0 0 1 .026.064.44.44 0 0 1-.06.2.3.3 0 0 1-.094.124.1.1 0 0 1-.069.015c-.09-.003-.258-.066-.498-.256M8.278 6.97c-.04.244-.108.524-.2.829a5 5 0 0 1-.089-.346c-.076-.353-.087-.63-.046-.822.038-.177.11-.248.196-.283a.5.5 0 0 1 .145-.04c.013.03.028.092.032.198q.008.183-.038.465z"/><path fill-rule="evenodd" d="M4 0h5.293A1 1 0 0 1 10 .293L13.707 4a1 1 0 0 1 .293.707V14a2 2 0 0 1-2 2H4a2 2 0 0 1-2-2V2a2 2 0 0 1 2-2m5.5 1.5v2a1 1 0 0 0 1 1h2zM4.165 13.668c.09.18.23.343.438.419.207.075.412.04.58-.03.318-.13.635-.436.926-.786.333-.401.683-.927 1.021-1.51a11.7 11.7 0 0 1 1.997-.406c.3.383.61.713.91.95.28.22.603.403.934.417a.86.86 0 0 0 .51-.138c.155-.101.27-.247.354-.416.09-.181.145-.37.138-.563a.84.84 0 0 0-.2-.518c-.226-.27-.596-.4-.96-.465a5.8 5.8 0 0 0-1.335-.05 11 11 0 0 1-.98-1.686c.25-.66.437-1.284.52-1.794.036-.218.055-.426.048-.614a1.24 1.24 0 0 0-.127-.538.7.7 0 0 0-.477-.365c-.202-.043-.41 0-.601.077-.377.15-.576.47-.651.823-.073.34-.04.736.046 1.136.088.406.238.848.43 1.295a20 20 0 0 1-1.062 2.227 7.7 7.7 0 0 0-1.482.645c-.37.22-.699.48-.897.787-.21.326-.275.714-.08 1.103"/></svg><div class="b circ" style="left:3331px;top:28.5px;width:64px;height:62px;background:#f8f9fa;"></div><svg class="a" style="left:3349px;top:46.5px" width="28" height="28" viewBox="0 0 16 16" fill="#0d6efd"><path d="M9.293 0H4a2 2 0 0 0-2 2v12a2 2 0 0 0 2 2h8a2 2 0 0 0 2-2V4.707A1 1 0 0 0 13.707 4L10 .293A1 1 0 0 0 9.293 0M9.5 3.5v-2l3 3h-2a1 1 0 0 1-1-1M6.646 7.646a.5.5 0 1 1 .708.708L5.707 10l1.647 1.646a.5.5 0 0 1-.708.708l-2-2a.5.5 0 0 1 0-.708zm2.708 0 2 2a.5.5 0 0 1 0 .708l-2 2a.5.5 0 0 1-.708-.708L10.293 10 8.646 8.354a.5.5 0 1 1 .708-.708"/></svg><div class="b circ" style="left:3403px;top:28.5px;width:64px;height:62px;background:#f8f9fa;"></div><svg class="a" style="left:3421px;top:46.5px" width="28" height="28" viewBox="0 0 16 16" fill="#198754"><path d="M16 8A8 8 0 1 1 0 8a8 8 0 0 1 16 0m-3.97-3.03a.75.75 0 0 0-1.08.022L7.477 9.417 5.384 7.323a.75.75 0 0 0-1.06 1.06L6.97 11.03a.75.75 0 0 0 1.079-.02l3.992-4.99a.75.75 0 0 0-.01-1.05z"/></svg></div><div class="b" style="left:0px;top:426px;width:3783px;height:124px;border-bottom:2px solid #dee2e6;background:#f2f2f2;" role="row"><span class="t" style="left:16px;top:44px;font-size:32px;font-weight:700;color:#212529;letter-spacing:-0.19px;">#25</span><div class="b" style="left:555px;top:42px;width:115.8px;height:40px;background:rgba(13,110,253,.1);border-radius:20px;"></div><span class="t" style="left:571.6px;top:52.25px;font-size:24px;font-weight:700;color:#0d6efd;letter-spacing:-0.89px;">Factura</span><span class="t" style="left:1095.4px;top:24.75px;font-size:32px;font-weight:700;color:#212529;letter-spacing:-0.05px;">Demo Sii</span><span class="t" style="left:1096.4px;top:68px;font-size:28px;color:#595c5f;letter-spacing:-0.61px;">60803000-K</span><span class="t" style="left:1638px;top:44px;font-size:32px;font-weight:700;color:#212529;letter-spacing:0.38px;">$ 899</span><span class="t" style="left:2177.6px;top:44px;font-size:32px;color:#000;letter-spacing:0.17px;">29/12/2025</span><div class="b" style="left:2717px;top:22.2px;width:178px;height:41.5px;background:#ffc107;border-radius:12px;"></div><svg class="a" style="left:2733.5px;top:29.95px" width="24" height="24" viewBox="0 0 16 16" fill="#212529"><path d="M15.964.686a.5.5 0 0 0-.65-.65L.767 5.855H.766l-.452.18a.5.5 0 0 0-.082.887l.41.26.001.002 4.995 3.178 3.178 4.995.002.002.26.41a.5.5 0 0 0 .886-.083zm-1.833 1.89L6.637 10.07l-.215-.338a.5.5 0 0 0-.154-.154l-.338-.215 7.494-7.494 1.178-.471z"/></svg><span class="t" style="left:2772.5px;top:31.7px;font-size:24px;font-weight:700;color:#212529;letter-spacing:-0.24px;">ENVIADO</span><span class="t" style="left:2718px;top:77.9px;font-size:22.4px;color:#595c5f;letter-spacing:-0.66px;">Track: 244780530</span><div class="b circ" style="left:3259px;top:28px;width:64px;height:62px;background:#f8f9fa;"></div><svg class="a" style="left:3277px;top:46px" width="28" height="28" viewBox="0 0 16 16" fill="#dc3545"><path d="M5.523 12.424q.21-.124.459-.238a8 8 0 0 1-.45.606c-.28.337-.498.516-.635.572l-.035.012a.3.3 0 0 1-.026-.044c-.056-.11-.054-.216.04-.36.106-.165.319-.354.647-.548m2.455-1.647q-.178.037-.356.078a21 21 0 0 0 .5-1.05 12 12 0 0 0 .51.858q-.326.048-.654.114m2.525.939a4 4 0 0 1-.435-.41q.344.007.612.054c.317.057.466.147.518.209a.1.1 0 0 1 .026.064.44.44 0 0 1-.06.2.3.3 0 0 1-.094.124.1.1 0 0 1-.069.015c-.09-.003-.258-.066-.498-.256M8.278 6.97c-.04.244-.108.524-.2.829a5 5 0 0 1-.089-.346c-.076-.353-.087-.63-.046-.822.038-.177.11-.248.196-.283a.5.5 0 0 1 .145-.04c.013.03.028.092.032.198q.008.183-.038.465z"/><path fill-rule="evenodd" d="M4 0h5.293A1 1 0 0 1 10 .293L13.707 4a1 1 0 0 1 .293.707V14a2 2 0 0 1-2 2H4a2 2 0 0 1-2-2V2a2 2 0 0 1 2-2m5.5 1.5v2a1 1 0 0 0 1 1h2zM4.165 13.668c.09.18.23.343.438.419.207.075.412.04.58-.03.318-.13.635-.436.926-.786.333-.401.683-.927 1.021-1.51a11.7 11.7 0 0 1 1.997-.406c.3.383.61.713.91.95.28.22.603.403.934.417a.86.86 0 0 0 .51-.138c.155-.101.27-.247.354-.416.09-.181.145-.37.138-.563a.84.84 0 0 0-.2-.518c-.226-.27-.596-.4-.96-.465a5.8 5.8 0 0 0-1.335-.05 11 11 0 0 1-.98-1.686c.25-.66.437-1.284.52-1.794.036-.218.055-.426.048-.614a1.24 1.24 0 0 0-.127-.538.7.7 0 0 0-.477-.365c-.202-.043-.41 0-.601.077-.377.15-.576.47-.651.823-.073.34-.04.736.046 1.136.088.406.238.848.43 1.295a20 20 0 0 1-1.062 2.227 7.7 7.7 0 0 0-1.482.645c-.37.22-.699.48-.897.787-.21.326-.275.714-.08 1.103"/></svg><div class="b circ" style="left:3331px;top:28px;width:64px;height:62px;background:#f8f9fa;"></div><svg class="a" style="left:3349px;top:46px" width="28" height="28" viewBox="0 0 16 16" fill="#0d6efd"><path d="M9.293 0H4a2 2 0 0 0-2 2v12a2 2 0 0 0 2 2h8a2 2 0 0 0 2-2V4.707A1 1 0 0 0 13.707 4L10 .293A1 1 0 0 0 9.293 0M9.5 3.5v-2l3 3h-2a1 1 0 0 1-1-1M6.646 7.646a.5.5 0 1 1 .708.708L5.707 10l1.647 1.646a.5.5 0 0 1-.708.708l-2-2a.5.5 0 0 1 0-.708zm2.708 0 2 2a.5.5 0 0 1 0 .708l-2 2a.5.5 0 0 1-.708-.708L10.293 10 8.646 8.354a.5.5 0 1 1 .708-.708"/></svg><div class="b circ" style="left:3403px;top:28px;width:64px;height:62px;background:#f8f9fa;"></div><svg class="a" style="left:3421px;top:46px" width="28" height="28" viewBox="0 0 16 16" fill="#198754"><path d="M16 8A8 8 0 1 1 0 8a8 8 0 0 1 16 0m-3.97-3.03a.75.75 0 0 0-1.08.022L7.477 9.417 5.384 7.323a.75.75 0 0 0-1.06 1.06L6.97 11.03a.75.75 0 0 0 1.079-.02l3.992-4.99a.75.75 0 0 0-.01-1.05z"/></svg></div><div class="b" style="left:0px;top:550px;width:3783px;height:122px;border-bottom:2px solid #dee2e6;background:#fff;" role="row"><span class="t" style="left:16px;top:43.9px;font-size:32px;font-weight:700;color:#212529;letter-spacing:-0.19px;">#24</span><div class="b" style="left:555px;top:41.9px;width:115.8px;height:40px;background:rgba(13,110,253,.1);border-radius:20px;"></div><span class="t" style="left:571.6px;top:52.15px;font-size:24px;font-weight:700;color:#0d6efd;letter-spacing:-0.89px;">Factura</span><span class="t" style="left:1095.4px;top:24.65px;font-size:32px;font-weight:700;color:#212529;letter-spacing:-0.05px;">Demo Sii</span><span class="t" style="left:1096.4px;top:67.9px;font-size:28px;color:#595c5f;letter-spacing:-0.61px;">60803000-K</span><span class="t" style="left:1638px;top:43.9px;font-size:32px;font-weight:700;color:#212529;letter-spacing:-0.19px;">$ 890</span><span class="t" style="left:2177.6px;top:43.9px;font-size:32px;color:#000;letter-spacing:0.17px;">29/12/2025</span><div class="b" style="left:2717px;top:20.3px;width:178px;height:41.5px;background:#ffc107;border-radius:12px;"></div><svg class="a" style="left:2733.5px;top:28.05px" width="24" height="24" viewBox="0 0 16 16" fill="#212529"><path d="M15.964.686a.5.5 0 0 0-.65-.65L.767 5.855H.766l-.452.18a.5.5 0 0 0-.082.887l.41.26.001.002 4.995 3.178 3.178 4.995.002.002.26.41a.5.5 0 0 0 .886-.083zm-1.833 1.89L6.637 10.07l-.215-.338a.5.5 0 0 0-.154-.154l-.338-.215 7.494-7.494 1.178-.471z"/></svg><span class="t" style="left:2772.5px;top:29.8px;font-size:24px;font-weight:700;color:#212529;letter-spacing:-0.24px;">ENVIADO</span><span class="t" style="left:2718px;top:76px;font-size:22.4px;color:#595c5f;letter-spacing:-0.66px;">Track: 244780456</span><div class="b circ" style="left:3259px;top:27.9px;width:64px;height:62px;background:#f8f9fa;"></div><svg class="a" style="left:3277px;top:45.9px" width="28" height="28" viewBox="0 0 16 16" fill="#dc3545"><path d="M5.523 12.424q.21-.124.459-.238a8 8 0 0 1-.45.606c-.28.337-.498.516-.635.572l-.035.012a.3.3 0 0 1-.026-.044c-.056-.11-.054-.216.04-.36.106-.165.319-.354.647-.548m2.455-1.647q-.178.037-.356.078a21 21 0 0 0 .5-1.05 12 12 0 0 0 .51.858q-.326.048-.654.114m2.525.939a4 4 0 0 1-.435-.41q.344.007.612.054c.317.057.466.147.518.209a.1.1 0 0 1 .026.064.44.44 0 0 1-.06.2.3.3 0 0 1-.094.124.1.1 0 0 1-.069.015c-.09-.003-.258-.066-.498-.256M8.278 6.97c-.04.244-.108.524-.2.829a5 5 0 0 1-.089-.346c-.076-.353-.087-.63-.046-.822.038-.177.11-.248.196-.283a.5.5 0 0 1 .145-.04c.013.03.028.092.032.198q.008.183-.038.465z"/><path fill-rule="evenodd" d="M4 0h5.293A1 1 0 0 1 10 .293L13.707 4a1 1 0 0 1 .293.707V14a2 2 0 0 1-2 2H4a2 2 0 0 1-2-2V2a2 2 0 0 1 2-2m5.5 1.5v2a1 1 0 0 0 1 1h2zM4.165 13.668c.09.18.23.343.438.419.207.075.412.04.58-.03.318-.13.635-.436.926-.786.333-.401.683-.927 1.021-1.51a11.7 11.7 0 0 1 1.997-.406c.3.383.61.713.91.95.28.22.603.403.934.417a.86.86 0 0 0 .51-.138c.155-.101.27-.247.354-.416.09-.181.145-.37.138-.563a.84.84 0 0 0-.2-.518c-.226-.27-.596-.4-.96-.465a5.8 5.8 0 0 0-1.335-.05 11 11 0 0 1-.98-1.686c.25-.66.437-1.284.52-1.794.036-.218.055-.426.048-.614a1.24 1.24 0 0 0-.127-.538.7.7 0 0 0-.477-.365c-.202-.043-.41 0-.601.077-.377.15-.576.47-.651.823-.073.34-.04.736.046 1.136.088.406.238.848.43 1.295a20 20 0 0 1-1.062 2.227 7.7 7.7 0 0 0-1.482.645c-.37.22-.699.48-.897.787-.21.326-.275.714-.08 1.103"/></svg><div class="b circ" style="left:3331px;top:27.9px;width:64px;height:62px;background:#f8f9fa;"></div><svg class="a" style="left:3349px;top:45.9px" width="28" height="28" viewBox="0 0 16 16" fill="#0d6efd"><path d="M9.293 0H4a2 2 0 0 0-2 2v12a2 2 0 0 0 2 2h8a2 2 0 0 0 2-2V4.707A1 1 0 0 0 13.707 4L10 .293A1 1 0 0 0 9.293 0M9.5 3.5v-2l3 3h-2a1 1 0 0 1-1-1M6.646 7.646a.5.5 0 1 1 .708.708L5.707 10l1.647 1.646a.5.5 0 0 1-.708.708l-2-2a.5.5 0 0 1 0-.708zm2.708 0 2 2a.5.5 0 0 1 0 .708l-2 2a.5.5 0 0 1-.708-.708L10.293 10 8.646 8.354a.5.5 0 1 1 .708-.708"/></svg><div class="b circ" style="left:3403px;top:27.9px;width:64px;height:62px;background:#f8f9fa;"></div><svg class="a" style="left:3421px;top:45.9px" width="28" height="28" viewBox="0 0 16 16" fill="#198754"><path d="M16 8A8 8 0 1 1 0 8a8 8 0 0 1 16 0m-3.97-3.03a.75.75 0 0 0-1.08.022L7.477 9.417 5.384 7.323a.75.75 0 0 0-1.06 1.06L6.97 11.03a.75.75 0 0 0 1.079-.02l3.992-4.99a.75.75 0 0 0-.01-1.05z"/></svg></div><div class="b" style="left:0px;top:672px;width:3783px;height:124px;border-bottom:2px solid #dee2e6;background:#f2f2f2;" role="row"><span class="t" style="left:16px;top:46px;font-size:32px;font-weight:700;color:#212529;letter-spacing:-0.19px;">#12</span><div class="b" style="left:555px;top:44px;width:103.8px;height:40px;background:rgba(25,135,84,.1);border-radius:20px;"></div><span class="t" style="left:571.6px;top:54.25px;font-size:24px;font-weight:700;color:#198754;letter-spacing:-0.52px;">Boleta</span><span class="t" style="left:1095.4px;top:26.75px;font-size:32px;font-weight:700;color:#212529;letter-spacing:-0.05px;">Demo Sii</span><span class="t" style="left:1096.4px;top:70px;font-size:28px;color:#595c5f;letter-spacing:-0.61px;">60803000-K</span><span class="t" style="left:1638px;top:46px;font-size:32px;font-weight:700;color:#212529;letter-spacing:-0.19px;">$ 200</span><span class="t" style="left:2177.6px;top:46px;font-size:32px;color:#000;letter-spacing:0.17px;">29/12/2025</span><div class="b" style="left:2717px;top:22px;width:178px;height:41.5px;background:#ffc107;border-radius:12px;"></div><svg class="a" style="left:2733.5px;top:29.75px" width="24" height="24" viewBox="0 0 16 16" fill="#212529"><path d="M15.964.686a.5.5 0 0 0-.65-.65L.767 5.855H.766l-.452.18a.5.5 0 0 0-.082.887l.41.26.001.002 4.995 3.178 3.178 4.995.002.002.26.41a.5.5 0 0 0 .886-.083zm-1.833 1.89L6.637 10.07l-.215-.338a.5.5 0 0 0-.154-.154l-.338-.215 7.494-7.494 1.178-.471z"/></svg><span class="t" style="left:2772.5px;top:31.5px;font-size:24px;font-weight:700;color:#212529;letter-spacing:-0.24px;">ENVIADO</span><span class="t" style="left:2718px;top:77.7px;font-size:22.4px;color:#595c5f;letter-spacing:-0.66px;">Track: 244780356</span><div class="b circ" style="left:3259px;top:30px;width:64px;height:62px;background:#f8f9fa;"></div><svg class="a" style="left:3277px;top:48px" width="28" height="28" viewBox="0 0 16 16" fill="#dc3545"><path d="M5.523 12.424q.21-.124.459-.238a8 8 0 0 1-.45.606c-.28.337-.498.516-.635.572l-.035.012a.3.3 0 0 1-.026-.044c-.056-.11-.054-.216.04-.36.106-.165.319-.354.647-.548m2.455-1.647q-.178.037-.356.078a21 21 0 0 0 .5-1.05 12 12 0 0 0 .51.858q-.326.048-.654.114m2.525.939a4 4 0 0 1-.435-.41q.344.007.612.054c.317.057.466.147.518.209a.1.1 0 0 1 .026.064.44.44 0 0 1-.06.2.3.3 0 0 1-.094.124.1.1 0 0 1-.069.015c-.09-.003-.258-.066-.498-.256M8.278 6.97c-.04.244-.108.524-.2.829a5 5 0 0 1-.089-.346c-.076-.353-.087-.63-.046-.822.038-.177.11-.248.196-.283a.5.5 0 0 1 .145-.04c.013.03.028.092.032.198q.008.183-.038.465z"/><path fill-rule="evenodd" d="M4 0h5.293A1 1 0 0 1 10 .293L13.707 4a1 1 0 0 1 .293.707V14a2 2 0 0 1-2 2H4a2 2 0 0 1-2-2V2a2 2 0 0 1 2-2m5.5 1.5v2a1 1 0 0 0 1 1h2zM4.165 13.668c.09.18.23.343.438.419.207.075.412.04.58-.03.318-.13.635-.436.926-.786.333-.401.683-.927 1.021-1.51a11.7 11.7 0 0 1 1.997-.406c.3.383.61.713.91.95.28.22.603.403.934.417a.86.86 0 0 0 .51-.138c.155-.101.27-.247.354-.416.09-.181.145-.37.138-.563a.84.84 0 0 0-.2-.518c-.226-.27-.596-.4-.96-.465a5.8 5.8 0 0 0-1.335-.05 11 11 0 0 1-.98-1.686c.25-.66.437-1.284.52-1.794.036-.218.055-.426.048-.614a1.24 1.24 0 0 0-.127-.538.7.7 0 0 0-.477-.365c-.202-.043-.41 0-.601.077-.377.15-.576.47-.651.823-.073.34-.04.736.046 1.136.088.406.238.848.43 1.295a20 20 0 0 1-1.062 2.227 7.7 7.7 0 0 0-1.482.645c-.37.22-.699.48-.897.787-.21.326-.275.714-.08 1.103"/></svg><div class="b circ" style="left:3331px;top:30px;width:64px;height:62px;background:#f8f9fa;"></div><svg class="a" style="left:3349px;top:48px" width="28" height="28" viewBox="0 0 16 16" fill="#0d6efd"><path d="M9.293 0H4a2 2 0 0 0-2 2v12a2 2 0 0 0 2 2h8a2 2 0 0 0 2-2V4.707A1 1 0 0 0 13.707 4L10 .293A1 1 0 0 0 9.293 0M9.5 3.5v-2l3 3h-2a1 1 0 0 1-1-1M6.646 7.646a.5.5 0 1 1 .708.708L5.707 10l1.647 1.646a.5.5 0 0 1-.708.708l-2-2a.5.5 0 0 1 0-.708zm2.708 0 2 2a.5.5 0 0 1 0 .708l-2 2a.5.5 0 0 1-.708-.708L10.293 10 8.646 8.354a.5.5 0 1 1 .708-.708"/></svg><div class="b circ" style="left:3403px;top:30px;width:64px;height:62px;background:#f8f9fa;"></div><svg class="a" style="left:3421px;top:48px" width="28" height="28" viewBox="0 0 16 16" fill="#198754"><path d="M16 8A8 8 0 1 1 0 8a8 8 0 0 1 16 0m-3.97-3.03a.75.75 0 0 0-1.08.022L7.477 9.417 5.384 7.323a.75.75 0 0 0-1.06 1.06L6.97 11.03a.75.75 0 0 0 1.079-.02l3.992-4.99a.75.75 0 0 0-.01-1.05z"/></svg></div></div></main></div></body></html>
